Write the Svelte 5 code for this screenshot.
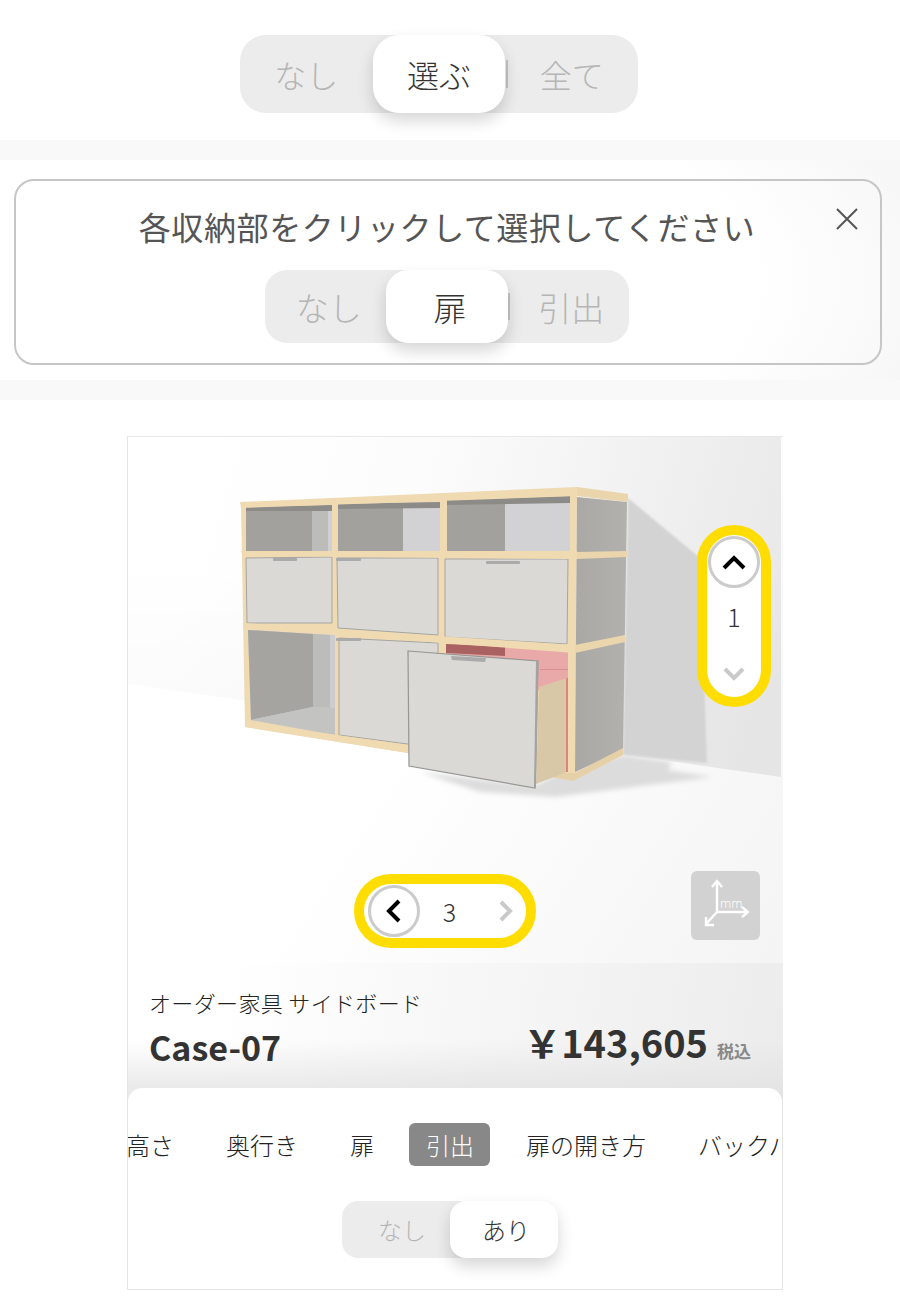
<script>
  const tabs = ['高さ', '奥行き', '扉', '引出', '扉の開き方', 'バックパネル'];
  const wood = '#efdab2';
  const boards = [
    '240,502 577,487 577,496 241,508',
    '241,551 577,551 577,559 243,556',
    '243,623 575,645 575,653 243,628',
    '245,722 408,745 408,753 245,727'
  ];
  const boardSides = [
    '577,487 628,494 628,502 577,496',
    '577,552 627,551 627,557 577,559',
    '575,645 625,635 625,642 575,653'
  ];
  const fronts = [
    '246,558 332,557 332,623 247,623',
    '337,558 438,558 438,635 338,628',
    '445,559 568,559 567,644 445,637',
    '339,638 438,643 438,748 339,735'
  ];
  const handles = [
    [273, 558, 24], [336, 558, 25], [486, 561, 34], [336, 638, 25]
  ];
</script>

<main class="page">
  <section class="top">
    <div class="toggle large">
      <span class="seg">なし</span>
      <span class="seg on">選ぶ</span>
      <span class="seg sep">全て</span>
    </div>
  </section>

  <section class="band">
    <div class="band-inner">
      <div class="card">
        <h2>各収納部をクリックして選択してください</h2>
        <button class="close" aria-label="close">
          <svg viewBox="0 0 24 24" width="24" height="24"><path d="M2 2 22 22M22 2 2 22" /></svg>
        </button>
        <div class="toggle medium">
          <span class="seg">なし</span>
          <span class="seg on">扉</span>
          <span class="seg sep">引出</span>
        </div>
      </div>
    </div>
  </section>

  <section class="viewer">
    <div class="stage">
      <svg class="scene" viewBox="128 437 655 526" width="655" height="526">
        <defs>
          <linearGradient id="wall" gradientUnits="userSpaceOnUse" x1="200" y1="480" x2="783" y2="640">
            <stop offset="0" stop-color="#ffffff" />
            <stop offset="0.35" stop-color="#fcfcfc" />
            <stop offset="1" stop-color="#e8e8e8" />
          </linearGradient>
          <linearGradient id="wallLow" gradientUnits="userSpaceOnUse" x1="128" y1="560" x2="128" y2="690">
            <stop offset="0" stop-color="#000" stop-opacity="0" />
            <stop offset="1" stop-color="#000" stop-opacity="0.015" />
          </linearGradient>
          <linearGradient id="floor" gradientUnits="userSpaceOnUse" x1="420" y1="720" x2="783" y2="963">
            <stop offset="0" stop-color="#ffffff" />
            <stop offset="1" stop-color="#f4f4f4" />
          </linearGradient>
          <linearGradient id="side" x1="0" y1="0" x2="1" y2="0">
            <stop offset="0" stop-color="#a9a8a5" />
            <stop offset="1" stop-color="#b2b1ae" />
          </linearGradient>
          <filter id="soft" x="-20%" y="-50%" width="140%" height="200%"><feGaussianBlur stdDeviation="2.5" /></filter>
          <filter id="edge" x="-5%" y="-5%" width="110%" height="110%"><feGaussianBlur stdDeviation="1.2" /></filter>
        </defs>

        <rect x="128" y="437" width="655" height="526" fill="url(#floor)" />
        <polygon points="128,437 781,437 781,777 128,684" fill="url(#wall)" />
        <polygon points="128,560 781,560 781,777 128,684" fill="url(#wallLow)" />
        <polygon points="628,498 700,558 707,763 623,755" fill="#d3d3d3" filter="url(#edge)" />
        <polygon points="420,772 535,786 551,777 623,755 672,762 668,770 713,777 610,790 556,797 480,792" fill="#dcdcdc" filter="url(#soft)" />

        <!-- carcass: wood behind every cell -->
        <polygon points="241,503 577,488 575,778 408,753 245,727" fill={wood} />

        <!-- open cells, top row -->
        <polygon points="246,508 332,505 332,551 246,551" fill="#d0d0d4" />
        <polygon points="312,510 328,510 328,551 312,551" fill="#bcbcbb" />
        <polygon points="246,510 312,510 312,551 246,551" fill="#a2a19e" />
        <polygon points="246,507 332,505 332,511 246,511" fill="#8c8b88" />
        <polygon points="338,505 440,502 440,551 338,551" fill="#d2d2d4" />
        <polygon points="338,508 403,508 403,551 338,551" fill="#a2a19e" />
        <polygon points="338,504 440,502 440,508 338,509" fill="#8c8b88" />
        <polygon points="447,500 570,496 570,551 447,551" fill="#d2d2d4" />
        <polygon points="447,503 505,503 505,551 447,551" fill="#a2a19e" />
        <polygon points="447,500 570,496 570,503 447,505" fill="#8c8b88" />

        <!-- open cell, bottom left -->
        <polygon points="248,630 335,635 335,735 251,720" fill="#cdcdd0" />
        <polygon points="313,634 330,635 330,708 313,707" fill="#bcbcba" />
        <polygon points="248,630 313,634 313,707 251,720" fill="#a5a4a1" />
        <polygon points="251,720 313,707 335,708 335,735" fill="#c3c3c2" />

        <!-- pink compartment behind open drawer -->
        <polygon points="446,644 568,650 568,690 446,690" fill="#eaa9a9" />
        <polygon points="446,644 505,647 505,656 446,653" fill="#a96161" />
        <polygon points="540,669 568,669 568,670 540,670" fill="#d98f8f" />

        <!-- side -->
        <polygon points="577,497 627,502 623,750 575,772" fill="url(#side)" />

        {#each fronts as p}
          <polygon points={p} fill="#dad9d5" stroke="#a5a5a3" stroke-width="1" />
        {/each}
        {#each boards as p}
          <polygon points={p} fill={wood} />
        {/each}
        {#each boardSides as p}
          <polygon points={p} fill="#ead5ad" />
        {/each}
        <polygon points="551,777 565,773 575,773 623,748 623,755 573,781" fill="#e6d0a8" />
        {#each handles as [x, y, w]}
          <rect {x} {y} width={w} height="3" rx="1" fill="#aaaaaa" />
        {/each}

        <!-- open drawer -->
        <polygon points="539,687 567,678 567,772 536,784" fill="#d9c8a8" />
        <polygon points="566,678 568,678 568,772 566,772" fill="#d9887c" />
        <polygon points="408,651 538,661 535,788 409,766" fill="#dad9d5" stroke="#969694" stroke-width="1.2" />
        <polygon points="536,661 538.5,661 536,788 534,788" fill="#a3a3a1" />
        <polygon points="451,656 486,658 485,662 452,660" fill="#aaaaaa" />
      </svg>

      <div class="pager vertical">
        <button class="round" aria-label="up">
          <svg viewBox="0 0 24 16" width="24" height="16"><path d="M2 14 12 4 22 14" /></svg>
        </button>
        <span class="num">1</span>
        <span class="ghost">
          <svg viewBox="0 0 24 16" width="24" height="16"><path d="M3 3 12 12 21 3" /></svg>
        </span>
      </div>

      <div class="pager horizontal">
        <button class="round" aria-label="left">
          <svg viewBox="0 0 16 24" width="16" height="24"><path d="M13 2 3 12 13 22" /></svg>
        </button>
        <span class="num">3</span>
        <span class="ghost">
          <svg viewBox="0 0 16 24" width="16" height="24"><path d="M3 3 12 12 3 21" /></svg>
        </span>
      </div>

      <div class="dim">
        <svg viewBox="0 0 69 69" width="69" height="69">
          <path d="M26 41V11M21 16l5-6 5 6M26 41H57M51 36l6 5-6 5M26 41 15 53M15 46v8h8" />
          <text x="29" y="37">mm</text>
        </svg>
      </div>
    </div>

    <div class="info">
      <p class="kind">オーダー家具 サイドボード</p>
      <div class="row">
        <strong class="name">Case-07</strong>
        <div class="price"><b>￥143,605</b><small>税込</small></div>
      </div>
    </div>

    <div class="panel">
      <nav class="tabs">
        {#each tabs as t}
          <span class="tab" class:active={t === '引出'}>{t}</span>
        {/each}
      </nav>
      <div class="toggle small">
        <span class="seg">なし</span>
        <span class="seg on">あり</span>
      </div>
    </div>
  </section>
</main>

<style>
  :global(body) {
    margin: 0;
    background: #fff;
  }
  .page {
    font-family: "Noto Sans CJK JP", "Noto Sans", sans-serif;
    font-weight: 300;
    color: #333;
    width: 900px;
    height: 1300px;
    overflow: hidden;
  }
  .top {
    height: 140px;
    box-sizing: border-box;
    padding: 35px 22px 0 0;
    display: flex;
    justify-content: center;
  }
  .band {
    background: #f9f9f9;
    padding: 20px 0;
  }
  .band-inner {
    height: 220px;
    box-sizing: border-box;
    padding: 19px 18px 15px 14px;
    background: radial-gradient(ellipse 90% 160% at 30% 55%, #fff 60%, #f1f1f1 100%);
  }
  .card {
    position: relative;
    box-sizing: border-box;
    height: 186px;
    border: 2px solid #c6c6c6;
    border-radius: 20px;
    display: flex;
    flex-direction: column;
    align-items: center;
    padding-top: 21px;
  }
  h2 {
    margin: 0 0 20px;
    font-size: 32px;
    letter-spacing: 0.6px;
    line-height: 48px;
    font-weight: 400;
    color: #555;
    transform: translateX(-1px);
  }
  .close {
    position: absolute;
    top: 26px;
    right: 21px;
    padding: 0;
    border: 0;
    background: none;
    width: 24px;
    height: 24px;
  }
  .close path {
    fill: none;
    stroke: #555;
    stroke-width: 2;
  }
  .toggle {
    display: grid;
    grid-auto-flow: column;
    grid-auto-columns: 1fr;
    background: #ececec;
    box-sizing: border-box;
  }
  .seg {
    position: relative;
    display: flex;
    align-items: center;
    justify-content: center;
    color: #b5b5b5;
  }
  .seg.on {
    background: #fff;
    color: #333;
    box-shadow: 0 8px 16px rgba(0, 0, 0, 0.16);
    z-index: 1;
  }
  .seg.sep::before {
    content: "";
    position: absolute;
    left: 1px;
    top: 32%;
    bottom: 32%;
    width: 2px;
    background: #c4c4c4;
  }
  .large {
    width: 398px;
    height: 78px;
    border-radius: 26px;
    font-size: 32px;
  }
  .large .seg.on {
    border-radius: 26px;
  }
  .medium {
    width: 364px;
    height: 73px;
    border-radius: 22px;
    font-size: 33px;
    margin-right: 2px;
  }
  .medium .seg {
    padding-left: 6px;
  }
  .medium .seg.sep::before {
    left: 0;
  }
  .medium .seg.on {
    border-radius: 22px;
  }
  .small {
    width: 216px;
    height: 57px;
    border-radius: 16px;
    font-size: 24px;
    margin-left: 214px;
  }
  .small .seg:first-child {
    padding-left: 12px;
  }
  .small .seg.on {
    border-radius: 16px;
    padding-left: 4px;
  }
  .viewer {
    margin: 36px 0 0 127px;
    width: 656px;
    height: 854px;
    box-sizing: border-box;
    border: 1px solid #e4e4e4;
    border-top-color: #e8e8e8;
    display: flex;
    flex-direction: column;
  }
  .stage {
    position: relative;
    height: 526px;
  }
  .scene {
    display: block;
  }
  .pager {
    position: absolute;
    box-sizing: border-box;
    background: #fff;
    border: 10px solid #ffdd00;
    border-radius: 37px;
    display: flex;
    align-items: center;
  }
  .vertical {
    flex-direction: column;
    left: 569px;
    top: 88px;
    width: 74px;
    height: 182px;
  }
  .horizontal {
    left: 226px;
    top: 437px;
    width: 182px;
    height: 74px;
  }
  .round {
    box-sizing: border-box;
    flex: none;
    width: 52px;
    height: 52px;
    margin: 0;
    padding: 0;
    border: 3px solid #cbcbcb;
    border-radius: 50%;
    background: #fff;
    display: flex;
    align-items: center;
    justify-content: center;
  }
  .vertical .round {
    margin-top: 1px;
  }
  .horizontal .round {
    margin-left: 4px;
  }
  .pager svg path {
    fill: none;
    stroke-width: 4;
    stroke: #000;
  }
  .ghost svg path {
    stroke: #c9c9c9;
  }
  .ghost {
    display: flex;
  }
  .num {
    font-size: 25px;
    color: #333;
  }
  .vertical .num {
    margin-top: 10px;
    line-height: 36px;
  }
  .vertical .ghost {
    margin-top: 32px;
  }
  .horizontal .num {
    margin-left: 22px;
    width: 15px;
    text-align: center;
  }
  .horizontal .ghost {
    margin-left: 41px;
  }
  .dim {
    position: absolute;
    left: 563px;
    top: 434px;
    width: 69px;
    height: 69px;
    background: #d2d2d2;
    border-radius: 6px;
  }
  .dim path {
    fill: none;
    stroke: #fff;
    stroke-width: 2.4;
  }
  .dim text {
    font-family: "Noto Sans", sans-serif;
    font-size: 12.5px;
    font-weight: 300;
    fill: #fff;
  }
  .info {
    height: 139px;
    box-sizing: border-box;
    padding: 23px 32px 0 21px;
    margin-right: -1px;
    background:
      linear-gradient(180deg, rgba(230, 230, 230, 0) 55%, rgba(225, 225, 225, 0.7) 90%),
      linear-gradient(100deg, #fff 15%, #ececec 100%);
  }
  .kind {
    margin: 0;
    font-size: 22px;
    line-height: 32px;
    letter-spacing: 0.35px;
    color: #222;
  }
  .row {
    display: flex;
    justify-content: space-between;
    align-items: baseline;
    margin-top: -1px;
  }
  .name {
    font-size: 34px;
    font-weight: 700;
    line-height: 50px;
  }
  .price {
    display: flex;
    align-items: baseline;
    gap: 9px;
    transform: translateY(-3px);
  }
  .price b {
    font-size: 38px;
    font-weight: 700;
  }
  .price small {
    font-size: 17px;
    font-weight: 700;
    color: #888;
  }
  .panel {
    flex: 1;
    position: relative;
    margin-top: -14px;
    background: #fff;
    border-radius: 14px 14px 0 0;
    padding-top: 35px;
  }
  .tabs {
    display: flex;
    gap: 20px;
    margin-left: -18px;
    margin-bottom: 34px;
    overflow: hidden;
    width: 671px;
    height: 44px;
    clip-path: inset(0 0 0 18px);
  }
  .tab {
    flex: none;
    height: 43px;
    line-height: 43px;
    padding: 0 16px;
    font-size: 24px;
    border-radius: 6px;
    color: #222;
  }
  .tab.active {
    background: #888;
    color: #fff;
    margin-left: -1px;
    padding-left: 17px;
  }
</style>
